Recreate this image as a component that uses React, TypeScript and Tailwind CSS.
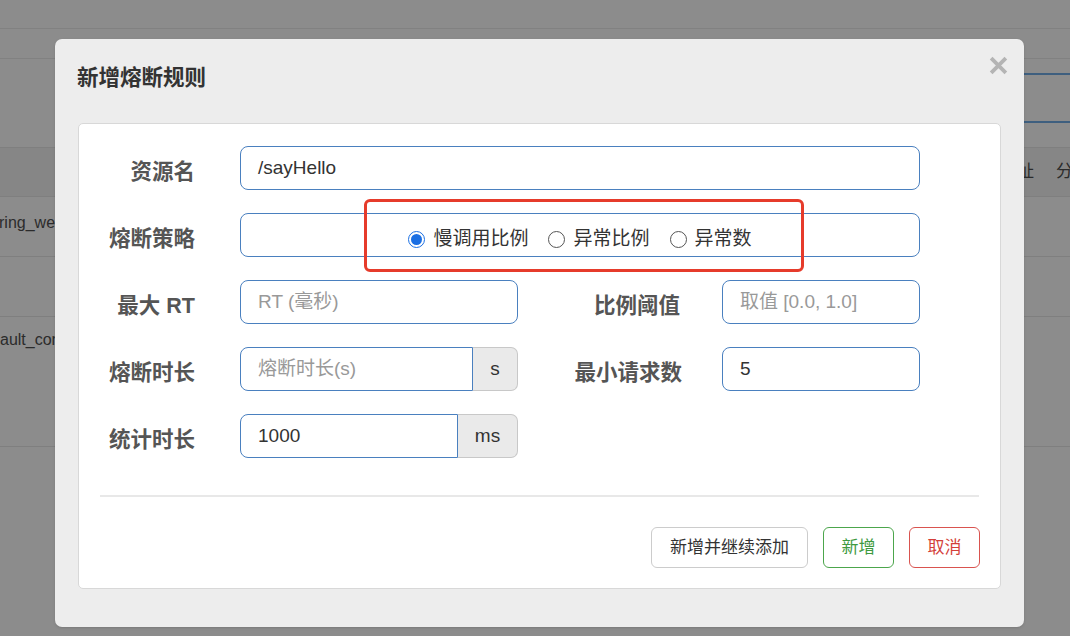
import React from "react";

const font = { fontFamily: '"Liberation Sans", "Noto Sans CJK SC", sans-serif' };

function Radio({ checked, label }: { checked?: boolean; label: string }) {
    return (
        <label className="flex items-center gap-[8px] text-[19px] text-[#333]">
            {checked ? (
                <span className="w-[17px] h-[17px] rounded-full border border-[#1b6fe3] bg-white flex items-center justify-center">
                    <span className="w-[11px] h-[11px] rounded-full bg-[#1b6fe3]" />
                </span>
            ) : (
                <span className="w-[17px] h-[17px] rounded-full border border-[#555] bg-white" />
            )}
            {label}
        </label>
    );
}

function Label({ text, w }: { text: string; w: string }) {
    return <div className={`${w} shrink-0 mt-[8px] text-right text-[21.5px] font-bold text-[#555]`}>{text}</div>;
}

export default function App() {
    const input = "h-[44px] border border-[#4a80bf] bg-white px-[17px] text-[19px] text-[#333] flex items-center";
    const addon = "h-[44px] border border-l-0 border-[#c8c8c8] bg-[#eaeaea] rounded-r-[7px] flex items-center justify-center text-[19px] text-[#333]";

    return (
        <div style={font} className="relative w-full h-[636px] overflow-hidden bg-[#8c8c8c]">
            {/* page behind the overlay */}
            <div className="flex flex-col">
                <div className="h-[29px] border-b border-[#818181]" />
                <div className="h-[30px] border-b border-[#818181]" />
                <div className="h-[88px] flex items-start justify-end pt-[14px]">
                    <div className="w-[200px] h-[50px] -mr-[10px] border-y-2 border-[#3e5f7f]" />
                </div>
                <div className="h-[50px] bg-[#868686] border-y border-[#7f7f7f] flex items-center justify-end -mr-[3px] text-[17px] text-[#2b2b2b]">
                    <span>址</span>
                    <span className="ml-[22px]">分</span>
                </div>
                <div className="h-[60px] border-b border-[#7f7f7f] flex items-center pb-[8px] -ml-[1px] text-[16px] text-[#2b2b2b]">ring_web_context</div>
                <div className="h-[60px] border-b border-[#7f7f7f]" />
                <div className="h-[130px] border-b border-[#7f7f7f] pt-[11px] text-[16px] text-[#2b2b2b]">ault_context</div>
            </div>

            {/* modal */}
            <div className="absolute left-[55px] top-[39px] w-[969px] h-[588px] rounded-[7px] bg-[#ededed] shadow-sm">
                <div className="h-[84px] pt-[25px] pl-[22px] text-[21.5px] leading-[28px] font-bold text-[#333]">新增熔断规则</div>
                <button className="absolute right-[15px] top-[16px] w-[21px] h-[21px]" aria-label="close">
                    <svg viewBox="0 0 20 20" width="21" height="21">
                        <path d="M3 3 L17 17 M17 3 L3 17" stroke="#b4b4b4" strokeWidth="3.6" strokeLinecap="butt" />
                    </svg>
                </button>

                <div className="mx-[23px] h-[466px] bg-white border border-[#d8d8d8] rounded-[5px] pt-[22px]">
                    <div className="flex flex-col gap-[23px]">
                        <div className="flex items-center">
                            <Label text="资源名" w="w-[116px]" />
                            <div className={`${input} ml-[45px] w-[680px] rounded-[8px]`}>/sayHello</div>
                        </div>
                        <div className="flex items-center">
                            <Label text="熔断策略" w="w-[116px]" />
                            <div className={`${input} ml-[45px] w-[680px] rounded-[8px] justify-center`}>
                                <div className="mt-[8px] flex items-center gap-[20px]">
                                    <Radio checked label="慢调用比例" />
                                    <Radio label="异常比例" />
                                    <Radio label="异常数" />
                                </div>
                            </div>
                        </div>
                        <div className="flex items-center">
                            <Label text="最大 RT" w="w-[116px]" />
                            <div className={`${input} ml-[45px] w-[278px] rounded-[8px] text-[#999]`}>RT (毫秒)</div>
                            <Label text="比例阈值" w="w-[162px]" />
                            <div className={`${input} ml-[42px] w-[198px] rounded-[8px] text-[#999]`}>取值 [0.0, 1.0]</div>
                        </div>
                        <div className="flex items-center">
                            <Label text="熔断时长" w="w-[116px]" />
                            <div className="ml-[45px] w-[278px] flex">
                                <div className={`${input} flex-1 rounded-l-[8px] text-[#999]`}>熔断时长(s)</div>
                                <div className={`${addon} w-[45px]`}>s</div>
                            </div>
                            <Label text="最小请求数" w="w-[164px]" />
                            <div className={`${input} ml-[40px] w-[198px] rounded-[8px]`}>5</div>
                        </div>
                        <div className="flex items-center">
                            <Label text="统计时长" w="w-[116px]" />
                            <div className="ml-[45px] w-[278px] flex">
                                <div className={`${input} flex-1 rounded-l-[8px]`}>1000</div>
                                <div className={`${addon} w-[60px]`}>ms</div>
                            </div>
                        </div>
                    </div>

                    <div className="mx-[21px] mt-[37px] h-[2px] bg-[#e8e8e8]" />

                    <div className="mt-[30px] pr-[20px] flex justify-end gap-[15px] text-[17px]">
                        <button className="h-[41px] w-[157px] rounded-[6px] border border-[#cccccc] bg-white text-[#333]">新增并继续添加</button>
                        <button className="h-[41px] w-[71px] rounded-[6px] border border-[#4ca64c] bg-white text-[#3f9a3f]">新增</button>
                        <button className="h-[41px] w-[71px] rounded-[6px] border border-[#d9534f] bg-white text-[#d43f3a]">取消</button>
                    </div>
                </div>

                {/* red annotation box */}
                <div className="absolute left-[309px] top-[160px] w-[440px] h-[73px] border-[3px] border-[#e63b2b] rounded-[6px]" />
            </div>
        </div>
    );
}
